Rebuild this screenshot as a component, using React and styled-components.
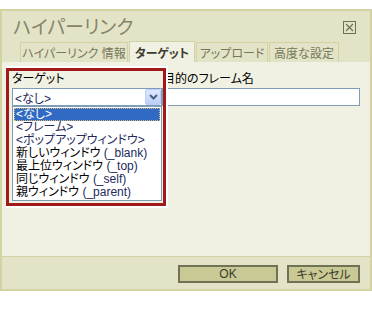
import React from 'react'
import styled, { createGlobalStyle } from 'styled-components'

const Global = createGlobalStyle`
  body {
    margin: 0;
    background: #fff;
    font-family: "Liberation Sans", "Noto Sans CJK JP", sans-serif;
    font-feature-settings: "palt";
  }
`

const Dialog = styled.div`
  margin-top: 9px;
  width: 372px;
  height: 282px;
  box-sizing: border-box;
  border: 2px solid #d3d3a1;
  background: #e3e3c7;
  display: flex;
  flex-direction: column;
`

const Header = styled.div`
  height: 51px;
  display: flex;
  flex-direction: column;
`

const TitleRow = styled.div`
  height: 30px;
  display: flex;
  align-items: center;
  justify-content: space-between;
  padding: 0 14px 0 11px;
`

const Title = styled.div`
  font-size: 19px;
  color: #85856a;
  line-height: 1;
  padding-top: 3px;
`

const Close = styled.div`
  width: 13px;
  height: 13px;
  padding-top: 3px;
  svg { display: block; }
`

const Tabs = styled.div`
  display: flex;
  gap: 1px;
  padding-left: 18px;
  height: 21px;
  align-items: flex-end;
`

const Tab = styled.div`
  width: ${p => p.w}px;
  height: ${p => (p.active ? 21 : 20)}px;
  box-sizing: border-box;
  border: 1px solid #d3d3a1;
  border-bottom: none;
  background: ${p => (p.active ? '#f1f1e3' : '#e3e3c7')};
  color: ${p => (p.active ? '#3e3e30' : '#77775c')};
  font-weight: ${p => (p.active ? 700 : 400)};
  font-size: 12px;
  display: flex;
  align-items: center;
  justify-content: center;
  white-space: nowrap;
`

const Body = styled.div`
  height: 194px;
  background: #f1f1e3;
  position: relative;
  padding: 9px 10px 0 10px;
  box-sizing: border-box;
  display: grid;
  grid-template-columns: 150px 1fr;
  column-gap: 0;
  align-content: start;
`

const Field = styled.div`
  display: flex;
  flex-direction: column;
  gap: 1px;
`

const Label = styled.div`
  font-size: 12px;
  line-height: 16px;
  color: #000;
  padding-left: ${p => p.indent || 0}px;
  white-space: nowrap;
`

const SelectWrap = styled.div`
  position: relative;
`

const SelectBox = styled.div`
  height: 18px;
  box-sizing: border-box;
  border: 1px solid #7f9db9;
  background: #fff;
  display: flex;
  align-items: center;
  justify-content: space-between;
  padding-left: 2px;
  font-size: 12px;
`

const DropButton = styled.div`
  width: 16px;
  height: 16px;
  box-sizing: border-box;
  border: 1px solid #b9cdf6;
  border-radius: 2px;
  background: linear-gradient(#dde8fd, #bccff8);
  display: flex;
  align-items: center;
  justify-content: center;
`

const DropList = styled.div`
  position: absolute;
  top: 18px;
  left: 0;
  width: 150px;
  box-sizing: border-box;
  border: 1px solid #7f9db9;
  background: #fff;
  padding: 1px 0 1px;
  z-index: 2;
`

const Option = styled.div`
  height: 13px;
  line-height: 13px;
  font-size: 12px;
  padding-left: 2px;
  margin: 0 1px;
  white-space: nowrap;
  color: ${p => (p.selected ? '#fff' : '#000')};
  background: ${p => (p.selected ? '#316ac5' : 'transparent')};
  outline: ${p => (p.selected ? '1px dotted #d8b870' : 'none')};
  outline-offset: -1px;
`

const Latin = styled.span`
  color: ${p => (p.light ? '#fff' : '#232a5c')};
`

const TextInput = styled.div`
  height: 18px;
  box-sizing: border-box;
  border: 1px solid #7f9db9;
  background: #fff;
`

const Highlight = styled.div`
  position: absolute;
  left: 4px;
  top: 6px;
  width: 160px;
  height: 138px;
  box-sizing: border-box;
  border: 3px solid #a11a1a;
  box-shadow: 2px 0 0 0 #fff, 0 -2px 0 0 #fff, 0 2px 0 0 #fff, 2px 2px 0 0 #fff, 2px -2px 0 0 #fff;
  z-index: 3;
  pointer-events: none;
`

const Footer = styled.div`
  height: 33px;
  box-sizing: border-box;
  border-top: 1px solid #d3d3a1;
  display: flex;
  justify-content: flex-end;
  align-items: center;
  gap: 9px;
  padding: 1px 10px 0 0;
`

const Button = styled.div`
  width: ${p => p.w}px;
  height: 18px;
  box-sizing: border-box;
  border: 2px solid #717155;
  background: #c9c995;
  color: #3a3a2c;
  font-size: 12px;
  display: flex;
  align-items: center;
  justify-content: center;
`

const options = [
  ['<なし>'],
  ['<フレーム>'],
  ['<ポップアップウィンドウ>'],
  ['新しいウィンドウ ', '(_blank)'],
  ['最上位ウィンドウ ', '(_top)'],
  ['同じウィンドウ ', '(_self)'],
  ['親ウィンドウ ', '(_parent)'],
]

export default function App() {
  return (
    <>
      <Global />
      <Dialog>
        <Header>
          <TitleRow>
            <Title>ハイパーリンク</Title>
            <Close>
              <svg width="13" height="13" viewBox="0 0 13 13">
                <rect x="0.5" y="0.5" width="12" height="12" fill="none" stroke="#6f6f55" />
                <path d="M3 3 L10 10 M10 3 L3 10" stroke="#6f6f55" strokeWidth="1.2" />
              </svg>
            </Close>
          </TitleRow>
          <Tabs>
            <Tab w={108}>ハイパーリンク 情報</Tab>
            <Tab w={66} active>ターゲット</Tab>
            <Tab w={72}>アップロード</Tab>
            <Tab w={70}>高度な設定</Tab>
          </Tabs>
        </Header>
        <Body>
          <Field>
            <Label>ターゲット</Label>
            <SelectWrap>
              <SelectBox>
                <Latin>&lt;なし&gt;</Latin>
                <DropButton>
                  <svg width="9" height="6" viewBox="0 0 9 6">
                    <path d="M1 1 L4.5 4.5 L8 1" fill="none" stroke="#4d6185" strokeWidth="2" />
                  </svg>
                </DropButton>
              </SelectBox>
              <DropList>
                {options.map(([jp, en], i) => (
                  <Option key={i} selected={i === 0}>
                    {en ? jp : <Latin light={i === 0}>{jp}</Latin>}
                    {en && <Latin>{en}</Latin>}
                  </Option>
                ))}
              </DropList>
            </SelectWrap>
          </Field>
          <Field>
            <Label indent={1}>目的のフレーム名</Label>
            <TextInput />
          </Field>
          <Highlight />
        </Body>
        <Footer>
          <Button w={100}>OK</Button>
          <Button w={73}>キャンセル</Button>
        </Footer>
      </Dialog>
    </>
  )
}
